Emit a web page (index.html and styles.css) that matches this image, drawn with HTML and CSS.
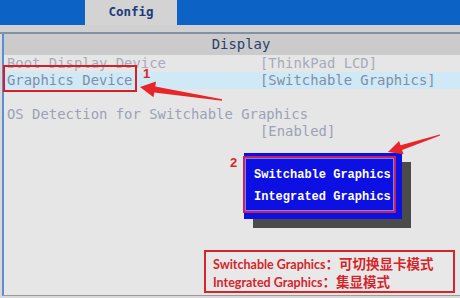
FILE: index.html
```html
<!DOCTYPE html>
<html>
<head>
<meta charset="utf-8">
<link rel="stylesheet" href="styles.css">
</head>
<body>
<div class="screen">
  <div class="topbar"><div class="tab">Config</div></div>
  <div class="strip"></div>
  <div class="panel">
    <div class="head">Display</div>
    <div class="rows">
      <div class="row dim"><span class="label">Boot Display Device</span><span class="val">[ThinkPad LCD]</span></div>
      <div class="row sel"><span class="label">Graphics Device</span><span class="val">[Switchable Graphics]</span></div>
      <div class="row"></div>
      <div class="row"><span class="label">OS Detection for Switchable Graphics</span></div>
      <div class="row"><span class="label"></span><span class="val">[Enabled]</span></div>
    </div>
  </div>

  <div class="mark mark-box"></div>
  <div class="num num-1">1</div>
  <div class="num num-2">2</div>

  <div class="popup">
    <div class="popup-frame">
      <div class="popup-inner">
        <div class="opt">Switchable Graphics</div>
        <div class="opt">Integrated Graphics</div>
      </div>
    </div>
  </div>

  <div class="note">
    <div class="note-line"><span class="en">Switchable Graphics</span><span class="zh">：可切换显卡模式</span></div>
    <div class="note-line"><span class="en">Integrated Graphics</span><span class="zh">：集显模式</span></div>
  </div>

  <svg class="arrows" width="460" height="298" viewBox="0 0 460 298">
    <polygon fill="#e8262a" points="140,87 156,81.5 155.3,86.4 222.1,99.3 221.9,100.7 154.3,92.4 153.5,97.3"/>
    <polygon fill="#e8262a" points="388,152 399.1,141 400.5,145.2 439.8,134.4 440.2,135.6 402.1,150 403.5,154.3"/>
  </svg>
</div>
</body>
</html>
```

FILE: styles.css
```css
* { box-sizing: border-box; }
html, body { margin: 0; padding: 0; }
body { background: #e6e6e6; }

.screen {
  position: relative;
  width: 460px;
  height: 298px;
  overflow: hidden;
  display: flex;
  flex-direction: column;
  background: #d9d9d9;
}

.topbar {
  height: 25px;
  background: #0d62c6;
  display: flex;
  flex-shrink: 0;
}
.tab {
  margin-left: 85px;
  width: 92px;
  background: #d3d3d3;
  color: #1f3a7a;
  font-family: "DejaVu Sans Mono", monospace;
  font-weight: bold;
  font-size: 12.5px;
  line-height: 23px;
  text-align: center;
}

.strip {
  height: 9px;
  flex-shrink: 0;
  background: #d0d0d0;
  border-bottom: 2px solid #8590a6;
}

.panel {
  flex: 1;
  margin-left: 2px;
  border-left: 2px solid #5b8fd2;
  border-bottom: 1px solid #9b9b9b;
  margin-bottom: 2px;
  background: #e6e6e6;
  font-family: "DejaVu Sans Mono", monospace;
  font-size: 13.9px;
}

.head {
  height: 21px;
  background: #cbcbcb;
  color: #2c3f70;
  text-align: center;
  padding-left: 18px;
  line-height: 20px;
}

.rows { display: flex; flex-direction: column; }
.row {
  height: 17px;
  line-height: 17px;
  display: grid;
  grid-template-columns: 253px auto;
  padding-left: 3px;
  color: #9aa2b8;
  white-space: nowrap;
}
.row.dim { color: #a6abbb; }
.row.sel { background: #cfe9f7; color: #7f8ea9; }
.label { white-space: nowrap; }

.mark-box {
  position: absolute;
  left: 3px;
  top: 65px;
  width: 134px;
  height: 27px;
  border: 2px solid #d41f2a;
}

.num {
  position: absolute;
  color: #d8262a;
  font-family: "Liberation Sans", sans-serif;
  font-weight: bold;
  font-size: 13px;
  line-height: 11px;
}
.num-1 { left: 143px; top: 68px; }
.num-2 { left: 230px; top: 157px; }

.popup {
  position: absolute;
  left: 244px;
  top: 153px;
  width: 158px;
  height: 66px;
  background: #0c10e2;
  box-shadow: 9px 9px 0 #4b4b4b;
  padding: 3px 6px 6px 0;
}
.popup-frame {
  margin-left: -1px;
  height: 100%;
  border: 2px solid #c1245c;
}
.popup-inner {
  height: 100%;
  border: 1px solid #8080f0;
  padding: 5px 0 0 8px;
}
.opt {
  color: #ffffff;
  font-family: "Liberation Mono", monospace;
  font-weight: bold;
  font-size: 12px;
  line-height: 22px;
  white-space: nowrap;
}

.note {
  position: absolute;
  left: 204px;
  top: 250px;
  width: 251px;
  height: 43px;
  border: 2px solid #d4252b;
  background: #e8e8e8;
  padding: 2px 0 0 7px;
  color: #d4252b;
  font-weight: bold;
}
.note-line {
  height: 18px;
  line-height: 18px;
  white-space: nowrap;
}
.en { font-family: "Lato", "Noto Sans", sans-serif; font-size: 12.5px; }
.zh { font-family: "Noto Sans CJK SC", sans-serif; font-size: 13.5px; }

.arrows {
  position: absolute;
  left: 0;
  top: 0;
  pointer-events: none;
}
```
